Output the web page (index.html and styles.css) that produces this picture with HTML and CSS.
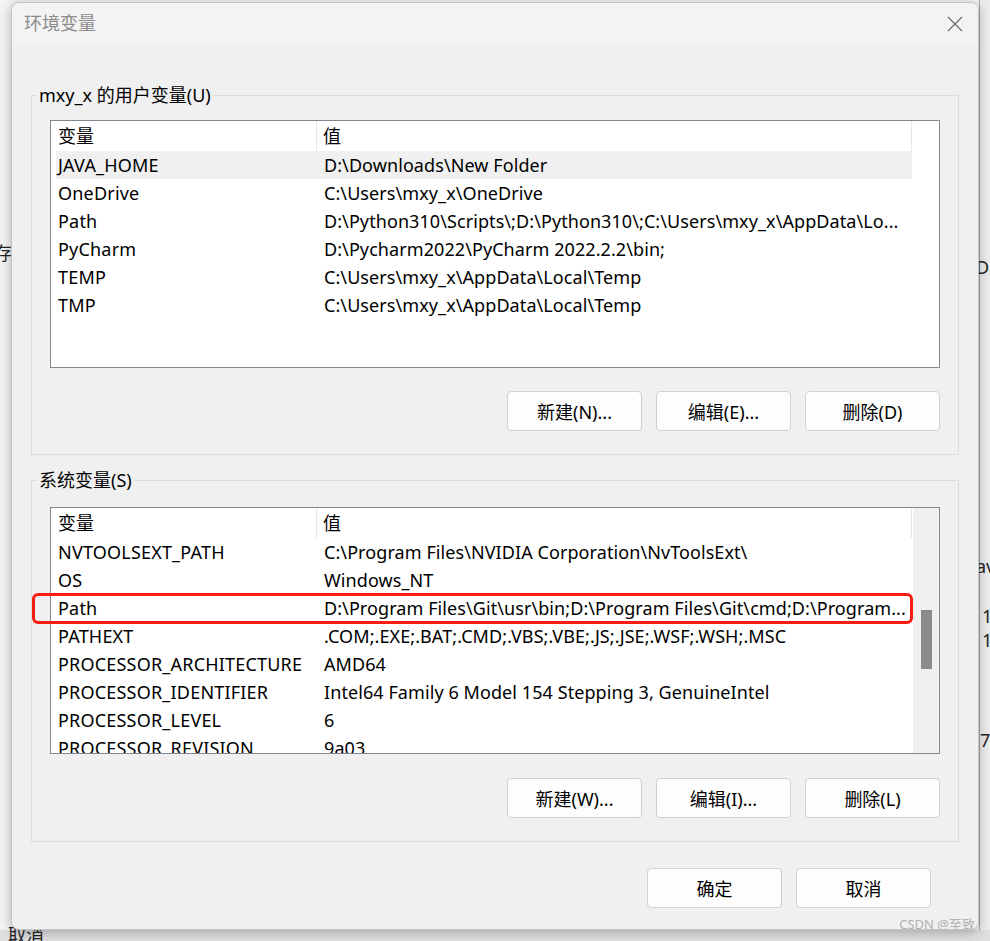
FILE: index.html
```html
<!DOCTYPE html>
<html lang="zh-CN">
  <head>
    <meta charset="UTF-8" />
    <meta name="viewport" content="width=device-width, initial-scale=1.0" />
    <title>环境变量</title>
    <link rel="stylesheet" href="styles.css">
  </head>
  <body>
    <div class="backdrop">
      <span class="bg-text bg-cun">存</span>
      <span class="bg-text bg-cancel">取消</span>
      <span class="bg-text bg-da">Da</span>
      <span class="bg-text bg-av">av</span>
      <span class="bg-text bg-one">1</span>
      <span class="bg-text bg-one2">1</span>
      <span class="bg-text bg-seven">7</span>
      <div class="bg-right"></div>
      <div class="bg-bottom"></div>
    </div>

    <div class="dialog">
      <div class="titlebar">
        <span class="title">环境变量</span>
        <span class="close">
          <svg width="16" height="16" viewBox="0 0 16 16">
            <path d="M1 1L15 15M15 1L1 15" stroke="#6b6b6b" stroke-width="1.2" fill="none" />
          </svg>
        </span>
      </div>

      <div class="content">
        <fieldset class="group">
          <legend>mxy_x 的用户变量(U)</legend>
          <div class="list">
            <div class="list-inner">
              <div class="list-head">
                <span class="col-name">变量</span>
                <span class="col-value">值</span>
              </div>
              <div class="row selected"><span class="col-name">JAVA_HOME</span><span class="col-value">D:\Downloads\New Folder</span></div>
              <div class="row"><span class="col-name">OneDrive</span><span class="col-value">C:\Users\mxy_x\OneDrive</span></div>
              <div class="row"><span class="col-name">Path</span><span class="col-value">D:\Python310\Scripts\;D:\Python310\;C:\Users\mxy_x\AppData\Lo...</span></div>
              <div class="row"><span class="col-name">PyCharm</span><span class="col-value">D:\Pycharm2022\PyCharm 2022.2.2\bin;</span></div>
              <div class="row"><span class="col-name">TEMP</span><span class="col-value">C:\Users\mxy_x\AppData\Local\Temp</span></div>
              <div class="row"><span class="col-name">TMP</span><span class="col-value">C:\Users\mxy_x\AppData\Local\Temp</span></div>
            </div>
          </div>
          <div class="actions">
            <button type="button">新建(N)...</button>
            <button type="button">编辑(E)...</button>
            <button type="button">删除(D)</button>
          </div>
        </fieldset>

        <fieldset class="group system">
          <legend>系统变量(S)</legend>
          <div class="list">
            <div class="list-inner">
              <div class="list-head">
                <span class="col-name">变量</span>
                <span class="col-value">值</span>
              </div>
              <div class="row"><span class="col-name">NVTOOLSEXT_PATH</span><span class="col-value">C:\Program Files\NVIDIA Corporation\NvToolsExt\</span></div>
              <div class="row"><span class="col-name">OS</span><span class="col-value">Windows_NT</span></div>
              <div class="row"><span class="col-name">Path</span><span class="col-value">D:\Program Files\Git\usr\bin;D:\Program Files\Git\cmd;D:\Program...</span></div>
              <div class="row"><span class="col-name">PATHEXT</span><span class="col-value">.COM;.EXE;.BAT;.CMD;.VBS;.VBE;.JS;.JSE;.WSF;.WSH;.MSC</span></div>
              <div class="row"><span class="col-name">PROCESSOR_ARCHITECTURE</span><span class="col-value">AMD64</span></div>
              <div class="row"><span class="col-name">PROCESSOR_IDENTIFIER</span><span class="col-value">Intel64 Family 6 Model 154 Stepping 3, GenuineIntel</span></div>
              <div class="row"><span class="col-name">PROCESSOR_LEVEL</span><span class="col-value">6</span></div>
              <div class="row"><span class="col-name">PROCESSOR_REVISION</span><span class="col-value">9a03</span></div>
            </div>
            <div class="scrollbar"><div class="thumb"></div></div>
            <div class="mark"></div>
          </div>
          <div class="actions">
            <button type="button">新建(W)...</button>
            <button type="button">编辑(I)...</button>
            <button type="button">删除(L)</button>
          </div>
        </fieldset>

        <div class="footer">
          <button type="button">确定</button>
          <button type="button">取消</button>
        </div>
      </div>

      <span class="watermark">CSDN @至致</span>
    </div>
  </body>
</html>
```

FILE: styles.css
```css
* {
  box-sizing: border-box;
}

body {
  margin: 0;
  height: 941px;
  overflow: hidden;
  background-color: #f4f4f4;
  font-family: "Noto Sans", "Noto Sans CJK SC", sans-serif;
  font-size: 18px;
  color: #000;
  position: relative;
}

/* the app window behind the dialog */
.backdrop {
  position: absolute;
  inset: 0;
}

.bg-right {
  position: absolute;
  left: 979px;
  top: 0;
  width: 11px;
  height: 941px;
  border-left: 1px solid #a8a8a8;
  background-color: #ececec;
}

.bg-bottom {
  position: absolute;
  left: 0;
  top: 930px;
  width: 990px;
  height: 11px;
  background-color: #dedede;
}

.bg-text {
  position: absolute;
  z-index: 1;
  font-size: 18px;
  line-height: 20px;
  color: #222;
}

.bg-cun { left: -6px; top: 243px; }
.bg-cancel { left: 8px; top: 925px; }
.bg-da { left: 976px; top: 257px; }
.bg-av { left: 976px; top: 556px; }
.bg-one { left: 982px; top: 606px; }
.bg-one2 { left: 982px; top: 630px; }
.bg-seven { left: 980px; top: 730px; }

.dialog {
  position: relative;
  z-index: 2;
  margin: 2px 0 0 11px;
  width: 968px;
  height: 928px;
  background-color: #f0f0f0;
  border: 1px solid #c4c4c4;
  border-radius: 8px;
  box-shadow: 0 2px 12px rgba(0, 0, 0, 0.28);
  overflow: hidden;
}

.titlebar {
  height: 41px;
  background-color: #f3f3f3;
  display: flex;
  align-items: center;
  justify-content: space-between;
  padding-left: 12px;
}

.title {
  color: #8a8a8a;
  font-size: 18px;
  margin-bottom: 3px;
}

.close {
  width: 46px;
  height: 41px;
  display: flex;
  align-items: center;
  justify-content: center;
}

.content {
  padding: 0 19px;
}

.group {
  margin: 40px 0 0;
  padding: 14px 18px 23px;
  border: 1px solid #dcdcdc;
  min-width: 0;
}

.group.system {
  margin-top: 14px;
  padding-top: 16px;
}

.group legend {
  margin-left: -13px;
  padding: 0 2px;
  line-height: 22px;
}

.list {
  position: relative;
  display: flex;
  height: 248px;
  border: 1px solid #828790;
  background-color: #fff;
}

.system .list {
  height: 247px;
}

.list-inner {
  flex: 1;
  overflow: hidden;
}

.list-head {
  display: flex;
  height: 30px;
  align-items: stretch;
}

.list-head .col-name {
  width: 266px;
  padding-left: 7px;
  border-right: 1px solid #e5e5e5;
  line-height: 30px;
}

.list-head .col-value {
  width: 595px;
  padding-left: 6px;
  border-right: 1px solid #e5e5e5;
  line-height: 30px;
}

.row {
  display: flex;
  height: 28px;
  margin-left: 5px;
  width: 856px;
  line-height: 28px;
  white-space: nowrap;
}

.row.selected {
  background-color: #f0f0f0;
}

.row .col-name {
  width: 261px;
  padding-left: 2px;
  letter-spacing: 0.2px;
}

.row .col-value {
  flex: 1;
  padding-left: 7px;
  overflow: hidden;
  letter-spacing: 0.08px;
}

.scrollbar {
  width: 26px;
  background-color: #f0f0f0;
  padding-top: 102px;
}

.thumb {
  margin-left: 8px;
  width: 11px;
  height: 59px;
  background-color: #8a8a8a;
}

/* red annotation around the Path row */
.mark {
  position: absolute;
  left: -19px;
  top: 85px;
  width: 881px;
  height: 31px;
  border: 3px solid #fb1d12;
  border-radius: 6px;
}

.actions {
  display: flex;
  justify-content: flex-end;
  gap: 14px;
  margin-top: 23px;
}

.system .actions {
  margin-top: 24px;
}

button {
  width: 135px;
  height: 40px;
  font-family: inherit;
  font-size: 18px;
  color: #000;
  background-color: #fdfdfd;
  border: 1px solid #d0d0d0;
  border-radius: 4px;
  padding: 0;
}

.footer {
  display: flex;
  justify-content: flex-end;
  gap: 14px;
  padding: 26px 28px 0 0;
}

.watermark {
  position: absolute;
  right: 3px;
  bottom: -4px;
  font-size: 13px;
  color: #b0b0b0;
}
```
